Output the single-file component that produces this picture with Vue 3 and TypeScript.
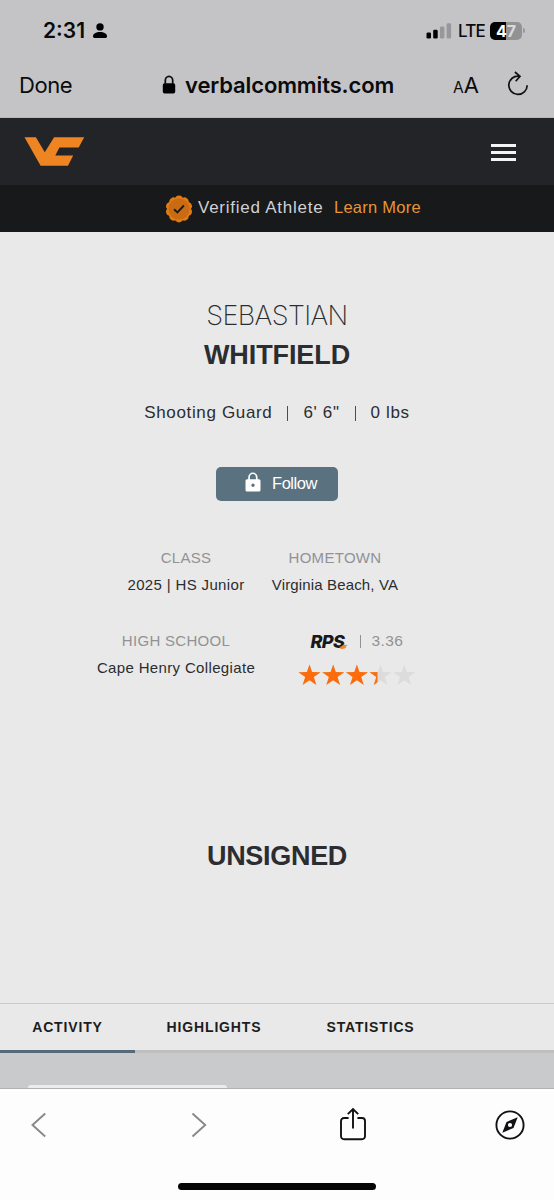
<script setup lang="ts">
interface Tab {
  label: string
  key: string
}

const tabs: Tab[] = [
  { label: 'ACTIVITY', key: 'activity' },
  { label: 'HIGHLIGHTS', key: 'highlights' },
  { label: 'STATISTICS', key: 'statistics' },
]
const activeTab = 'activity'
const starOffsets: number[] = [0, 23.7, 47.4, 71.1, 94.8]
const rating = 3.36
</script>

<template>
  <div class="screen">
    <header class="browser">
      <div class="status">
        <span class="time">2:31</span>
        <svg class="person" width="16" height="16" viewBox="0 0 16 16">
          <circle cx="8" cy="3.9" r="3.7" />
          <path d="M1 13.3C1 10.6 4 9 8 9s7 1.600 7 4.300c0 1.200-.5 1.700-1.500 1.700h-11C1.500 15 1 14.500 1 13.300z" />
        </svg>
        <svg class="signal" width="26" height="16" viewBox="0 0 26 16">
          <rect x="0.500" y="9.500" width="4.500" height="6" rx="1.300" />
          <rect x="7.200" y="6.800" width="4.500" height="8.700" rx="1.300" />
          <rect class="dim" x="13.900" y="3.500" width="4.500" height="12" rx="1.300" />
          <rect class="dim" x="20.600" y="0.200" width="4.500" height="15.300" rx="1.300" />
        </svg>
        <span class="lte">LTE</span>
        <div class="battery"><span>4</span><span class="low">7</span></div>
        <i class="nub"></i>
      </div>
      <div class="address">
        <span class="done">Done</span>
        <svg class="lock" width="14" height="20" viewBox="0 0 14 20">
          <rect x="0.800" y="8.200" width="12.400" height="10.300" rx="1.800" />
          <path d="M3.300 9V5.500a3.700 4.200 0 0 1 7.400 0V9" fill="none" stroke="#0a0b0c" stroke-width="1.700" />
        </svg>
        <span class="domain">verbalcommits.com</span>
        <span class="aa"><small>A</small>A</span>
        <svg class="reload" width="24" height="28" viewBox="0 0 24 28">
          <path d="M12.900 5.100A9.200 9.200 0 1 0 21.200 14.300M8.900 1L14 5.400 9.700 10.300" />
        </svg>
      </div>
    </header>

    <nav class="navbar">
      <svg class="logo" width="62" height="30" viewBox="0 0 62 30">
        <path d="M.5.200H11.900L20.800 15.300 30.100.200H60.200L54.700 10.400H35.400L31.300 18.400H49.200L44 28.800H16.600z" />
      </svg>
      <div class="burger"><i></i><i></i><i></i></div>
    </nav>
    <div class="banner">
      <svg class="badge" width="28" height="28" viewBox="-14 -14 28 28">
        <circle r="12" />
        <circle v-for="n in 10" :key="n" cy="-9.600" r="3.800" :transform="`rotate(${n * 36})`" />
        <circle r="10.500" class="seal" />
        <path d="M-4.900.3L-1.600 3.500 4.900-3.500" />
      </svg>
      <span class="verified">Verified Athlete</span>
      <a class="learn">Learn More</a>
    </div>

    <main class="profile">
      <h1>
        <span class="first">SEBASTIAN</span>
        <span class="last">WHITFIELD</span>
      </h1>
      <div class="vitals">
        <span class="position">Shooting Guard</span><i></i><span class="height">6' 6"</span><i></i><span class="weight">0 lbs</span>
      </div>
      <button class="follow">
        <svg width="16" height="21" viewBox="0 0 16 21">
          <path fill-rule="evenodd" d="M2 7.300H3.200V5.500a4.700 5 0 0 1 9.400 0V7.300H14a1.500 1.500 0 0 1 1.500 1.500V18a1.500 1.500 0 0 1-1.500 1.500H2A1.500 1.500 0 0 1 .5 18V8.800A1.500 1.500 0 0 1 2 7.300zM4.900 7.300H10.900V5.500a3 3.400 0 0 0-6 0zM8 11.500a1.700 1.700 0 1 0 0 3.400 1.700 1.700 0 0 0 0-3.400z" />
        </svg>
        <span>Follow</span>
      </button>
      <div class="facts">
        <section class="fact">
          <h2>CLASS</h2>
          <p>2025 | HS Junior</p>
        </section>
        <section class="fact hometown">
          <h2>HOMETOWN</h2>
          <p>Virginia Beach, VA</p>
        </section>
        <section class="fact school">
          <h2>HIGH SCHOOL</h2>
          <p>Cape Henry Collegiate</p>
        </section>
        <section class="fact">
          <div class="score">
            <span class="rps">RPS</span>
            <svg class="swoosh" width="9" height="6" viewBox="0 0 9 6"><path d="M0 2.600Q3 3 4 .8L8.700 1 6.500 2.700 7.500 3.200Q5 5.800 1 4.700L2 3.800z" /></svg>
            <i></i>
            <span class="number">{{ rating }}</span>
          </div>
          <svg class="stars" width="118" height="22" viewBox="0 0 118 22">
            <defs>
              <clipPath id="earned"><rect width="79.500" height="22" /></clipPath>
            </defs>
            <g class="empty">
              <path v-for="x in starOffsets" :key="x" :transform="`translate(${x})`" d="M11.500.5L14.100 8.100 22.600 8.200 15.800 13.100 18.400 21 11.500 16.200 4.600 21 7.200 13.100.4 8.200 8.900 8.100z" />
            </g>
            <g class="full" clip-path="url(#earned)">
              <path v-for="x in starOffsets" :key="x" :transform="`translate(${x})`" d="M11.500.5L14.100 8.100 22.600 8.200 15.800 13.100 18.400 21 11.500 16.200 4.600 21 7.200 13.100.4 8.200 8.900 8.100z" />
            </g>
          </svg>
        </section>
      </div>
      <div class="unsigned"><span>UNSIGNED</span></div>
    </main>

    <div class="tabs">
      <div v-for="tab in tabs" :key="tab.key" class="tab" :class="[tab.key, { active: tab.key === activeTab }]">
        <span>{{ tab.label }}</span>
      </div>
    </div>
    <div class="feed"><div class="card"></div></div>

    <footer class="toolbar">
      <div class="actions">
        <svg class="back" width="16" height="26" viewBox="0 0 16 26"><path d="M14.200 1.500L1.500 13 14.200 24.500" /></svg>
        <svg class="forward" width="16" height="26" viewBox="0 0 16 26"><path d="M1.500 1.500L14.200 13 1.500 24.500" /></svg>
        <svg class="share" width="28" height="36" viewBox="0 0 28 36">
          <path d="M9.600 12H5a3 3 0 0 0-3 3V30.300a3 3 0 0 0 3 3H23a3 3 0 0 0 3-3V15a3 3 0 0 0-3-3H18.400M14 22.500V3M8.800 8.200L14 3 19.200 8.200" />
        </svg>
        <svg class="compass" width="30" height="30" viewBox="0 0 30 30">
          <circle cx="15" cy="15" r="13.600" />
          <path fill-rule="evenodd" d="M22.700 7.300L18.500 18 7.300 22.700 11.500 12zM15 12.900a2.100 2.100 0 1 0 0 4.200 2.100 2.100 0 0 0 0-4.200z" />
        </svg>
      </div>
      <div class="home"></div>
    </footer>
  </div>
</template>

<style>
html, body { margin: 0; background: #fff; }
</style>

<style scoped>
* { box-sizing: border-box; }
.screen {
  width: 554px;
  height: 1200px;
  overflow: hidden;
  display: flex;
  flex-direction: column;
  background: #e9e9e9;
  color: #2b2d31;
  font-family: "Liberation Sans", Arial, sans-serif;
}
svg { display: block; flex: none; }
span { white-space: nowrap; }

.browser { height: 118px; flex: none; background: #c4c4c6; color: #0a0b0c; font-family: Inter, sans-serif; border-bottom: 1px solid #b8b8ba; }
.status { height: 61px; display: flex; align-items: center; padding-left: 43px; }
.time { width: 49px; font-size: 21px; font-weight: 600; }
.person { margin-top: 1px; }
.signal { margin-left: 318px; }
.dim { fill: #98989a; }
.lte { width: 25px; margin-left: 6px; font-size: 17px; font-weight: 500; letter-spacing: -0.8px; }
.battery {
  width: 32px; height: 18px; margin-left: 7px; border-radius: 5px;
  display: flex; align-items: center; justify-content: center;
  background: linear-gradient(90deg, #030303 49%, #929294 49%);
  color: #fff; font-size: 16px; font-weight: 700;
}
.low { color: #dadadc; }
.nub { width: 2px; height: 5px; margin-left: 1px; border-radius: 0 2px 2px 0; background: #98989a; }
.address { height: 48px; display: flex; align-items: center; padding-left: 19px; }
.done { width: 143px; font-size: 22px; letter-spacing: -0.4px; }
.domain { width: 210px; margin-left: 9px; font-size: 22px; font-weight: 600; letter-spacing: -0.12px; }
.aa { width: 28px; margin-left: 58px; font-size: 22px; }
.aa small { font-size: 15.500px; }
.reload { margin-left: 25px; fill: none; stroke: #101113; stroke-width: 1.700; }

.navbar { height: 67px; flex: none; display: flex; justify-content: space-between; background: #222427; }
.logo { margin: 19px 0 0 24px; fill: #ee8422; }
.burger { width: 25px; margin: 26px 38px 0 0; display: flex; flex-direction: column; gap: 4px; }
.burger i { height: 3px; background: #f4f4f5; }
.banner { height: 47px; flex: none; display: flex; align-items: center; padding-left: 165px; background: #18191b; color: #d0d1d3; font-size: 17px; }
.badge { margin-top: 1px; fill: #e07a14; }
.seal { fill: #c96b12; }
.badge path { fill: none; stroke: #1c1a18; stroke-width: 1.900; }
.verified { width: 136px; margin: -2px 0 0 5px; letter-spacing: 0.750px; }
.learn { margin-top: -2px; color: #e59634; font-size: 16.500px; letter-spacing: 0.250px; }

.profile { height: 771px; flex: none; display: flex; flex-direction: column; align-items: center; }
h1 { margin: 63px 0 0; display: flex; flex-direction: column; align-items: center; font-size: 27px; line-height: 40px; font-weight: 400; }
.first { position: relative; top: 1px; font-family: Inter, sans-serif; font-weight: 200; letter-spacing: -0.600px; }
.last { font-weight: 700; letter-spacing: -0.100px; }
.vitals { height: 28px; margin-top: 24px; display: flex; align-items: center; font-size: 17px; letter-spacing: 0.650px; }
.vitals i { width: 1px; height: 15px; margin: 0 15px; background: #4b4d50; }
.follow {
  width: 122px; height: 34px; margin: 40px 0 0; padding: 0 0 0 29px; border: 0; border-radius: 5px;
  display: flex; align-items: center; background: #5a7180; color: #fff; font: 16.500px "Liberation Sans", Arial, sans-serif;
}
.follow svg { margin-top: -4px; fill: #fff; }
.follow span { margin-left: 11px; margin-top: -2px; letter-spacing: -0.450px; }
.facts { width: 298px; margin: 44px 0 0 -33px; display: grid; grid-template-columns: 149px 149px; grid-auto-rows: 83px; }
.fact { display: flex; flex-direction: column; align-items: center; }
.school { margin-right: 20px; }
h2 { margin: 0; font-size: 15px; line-height: 25px; font-weight: 400; color: #929294; white-space: nowrap; letter-spacing: 0.300px; }
p { margin: 2px 0 0; font-size: 15px; line-height: 25px; white-space: nowrap; letter-spacing: 0.350px; }
.hometown p { letter-spacing: 0.150px; }
.score { width: 94px; height: 26px; display: flex; align-items: center; margin-left: 45px; }
.rps { width: 34px; color: #17191b; font: italic 800 18px Inter, sans-serif; letter-spacing: -0.6px; }
.swoosh { margin: 12px 0 0 -6px; fill: #ef8a28; }
.score i { width: 1px; height: 13px; margin-left: 12px; background: #929294; }
.number { margin-left: 11px; color: #929294; font-size: 15.500px; letter-spacing: 0.400px; }
.stars { margin: 10px 0 0 44px; }
.empty { fill: #dcdcdd; }
.full { fill: #fa6c0c; }
.unsigned { margin-top: 128px; font-size: 27px; line-height: 34px; font-weight: 700; letter-spacing: -0.300px; }

.tabs { height: 50px; flex: none; display: flex; border-top: 1px solid #cacaca; font-size: 14px; font-weight: 700; color: #1c1d20; }
.tab { height: 49px; display: flex; justify-content: center; line-height: 46px; border-bottom: 3px solid #bfbfbf; letter-spacing: 0.850px; }
.activity { width: 135px; }
.highlights { width: 158px; }
.statistics { width: 261px; padding-right: 106px; }
.active { border-bottom-color: #566a79; }
.feed { height: 36px; flex: none; padding: 32px 0 0 28px; background: #c9cacc; border-bottom: 1px solid #b2b2b4; }
.card { width: 199px; height: 3px; border-radius: 5px 5px 0 0; background: #ececed; }

.toolbar { height: 111px; flex: none; background: #fdfdfe; }
.actions { height: 72px; display: flex; align-items: center; padding-left: 31px; fill: none; stroke: #111214; stroke-width: 1.900; }
.back, .forward { stroke: #88888a; }
.forward { margin-left: 144px; }
.share { margin: -3px 0 0 132px; }
.compass { margin-left: 128px; }
.compass path { fill: #111214; stroke: none; }
.home { width: 198px; height: 7px; margin: 22px 0 0 178px; border-radius: 4px; background: #050505; }
</style>
